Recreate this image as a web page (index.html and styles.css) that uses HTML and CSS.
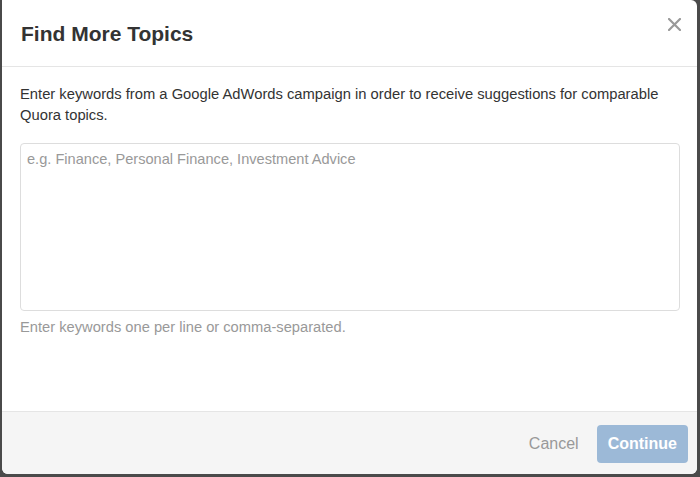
FILE: index.html
```html
<!DOCTYPE html>
<html lang="en">
<head>
<meta charset="UTF-8">
<meta name="viewport" content="width=device-width, initial-scale=1.0">
<title>Find More Topics</title>
<link rel="stylesheet" href="styles.css">
</head>
<body>
    <div class="modal">
        <div class="modal-header">
            <h2 class="modal-title">Find More Topics</h2>
            <button class="close-button" aria-label="Close">
                <svg width="13" height="13" viewBox="0 0 13 13">
                    <path d="M1 1 L12 12 M12 1 L1 12" stroke="#999" stroke-width="2.2" stroke-linecap="round"/>
                </svg>
            </button>
        </div>
        <div class="modal-body">
            <p class="intro">Enter keywords from a Google AdWords campaign in order to receive suggestions for comparable Quora topics.</p>
            <textarea class="keywords" placeholder="e.g. Finance, Personal Finance, Investment Advice"></textarea>
            <p class="help">Enter keywords one per line or comma-separated.</p>
        </div>
        <div class="modal-footer">
            <button class="cancel-button">Cancel</button>
            <button class="continue-button" disabled>Continue</button>
        </div>
    </div>
</body>
</html>
```

FILE: styles.css
```css
body {
    margin: 0;
    padding: 0;
    background-color: #4a4a4a;
    font-family: "Liberation Sans", Arial, sans-serif;
    color: #333;
}

.modal {
    margin: 0 3px 0 2px;
    height: 474px;
    background-color: white;
    border-radius: 0 6px 6px 6px;
    display: flex;
    flex-direction: column;
    overflow: hidden;
}

.modal-header {
    display: flex;
    justify-content: space-between;
    align-items: flex-start;
    padding: 21px 16px 20px 19px;
    border-bottom: 1px solid #e5e5e5;
}

.modal-title {
    margin: 0;
    font-size: 21px;
    line-height: 25px;
    font-weight: bold;
    color: #333;
}

.close-button {
    border: none;
    background: none;
    padding: 0;
    margin-top: -3px;
    width: 13px;
    height: 13px;
    cursor: pointer;
}

.close-button svg {
    display: block;
}

.modal-body {
    flex: 1;
    padding: 17px 17px 0 18px;
}

.intro {
    margin: 0 0 17px 0;
    font-size: 14.75px;
    line-height: 21px;
}

.keywords {
    display: block;
    box-sizing: border-box;
    width: 100%;
    height: 168px;
    margin: 0;
    padding: 6px 6px;
    border: 1px solid #ddd;
    border-radius: 4px;
    resize: none;
    font-family: "Liberation Sans", Arial, sans-serif;
    font-size: 14.6px;
    line-height: 18px;
    color: #333;
}

.keywords::placeholder {
    color: #999;
}

.help {
    margin: 6px 0 0 0;
    font-size: 14.7px;
    line-height: 20px;
    color: #999;
}

.modal-footer {
    display: flex;
    justify-content: flex-end;
    align-items: center;
    gap: 18px;
    padding: 13px 9px 11px 18px;
    background-color: #f5f5f5;
    border-top: 1px solid #e5e5e5;
}

.cancel-button {
    border: none;
    background: none;
    padding: 0;
    font-family: "Liberation Sans", Arial, sans-serif;
    font-size: 16px;
    color: #999;
    cursor: pointer;
}

.continue-button {
    height: 38px;
    padding: 0 11px;
    border: none;
    border-radius: 4px;
    background-color: #9cb9d7;
    font-family: "Liberation Sans", Arial, sans-serif;
    font-size: 16px;
    font-weight: bold;
    color: white;
}
```
